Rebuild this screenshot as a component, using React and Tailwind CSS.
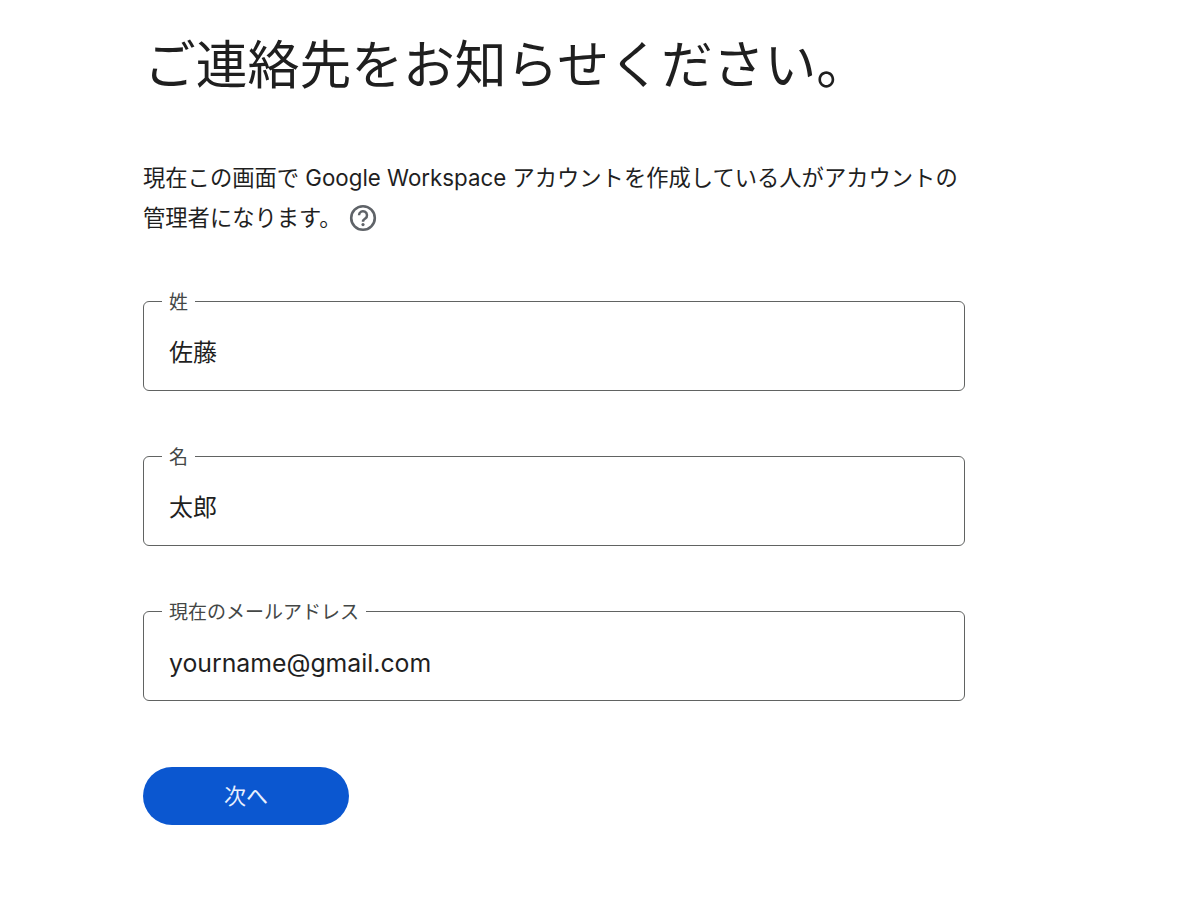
function Field({ label, value, mt, size }) {
  return (
    <div className={`relative w-[822px] h-[90px] border border-[#616362] rounded-[6px] ${mt}`}>
      <span className="absolute left-[18px] top-[-10px] bg-white px-[7px] text-[19px] leading-[22px] text-[#444746]">{label}</span>
      <div className={`pl-[25px] pt-[34px] leading-[34px] text-[#1f1f1f] ${size}`}>{value}</div>
    </div>
  );
}

export default function App() {
  return (
    <div className="w-[1200px] h-[911px] bg-white overflow-hidden pl-[143px] font-['Inter','Noto_Sans_CJK_JP',sans-serif]">
      <h1 className="text-[51.8px] leading-[64px] mt-[33px] ml-[1px] font-normal text-[#1f1f1f]">ご連絡先をお知らせください。</h1>
      <p className="mt-[61px] w-[830px] text-[22.3px] leading-[40px] text-[#1f1f1f]">
        現在この画面で Google Workspace アカウントを作成している人がアカウントの<br />
        <span className="inline-flex items-center">管理者になります。
          <svg className="ml-[8px]" width="28" height="28" viewBox="0 0 28 28" fill="none">
            <circle cx="14" cy="14" r="11.8" stroke="#5f6368" strokeWidth="2.6" />
            <path d="M10 11.2a4 4 0 1 1 6.3 3.3c-1.4 1-2.3 1.6-2.3 3.2" stroke="#5f6368" strokeWidth="2.5" />
            <circle cx="14" cy="20.6" r="1.6" fill="#5f6368" />
          </svg>
        </span>
      </p>
      <Field label="姓" value="佐藤" mt="mt-[63px]" size="text-[24px]" />
      <Field label="名" value="太郎" mt="mt-[65px]" size="text-[24px]" />
      <Field label="現在のメールアドレス" value="yourname@gmail.com" mt="mt-[65px]" size="text-[24.8px]" />
      <button className="block mt-[66px] w-[206px] h-[58px] rounded-full bg-[#0b57d0] text-[#e8f0fe] text-[22px]">次へ</button>
    </div>
  );
}
